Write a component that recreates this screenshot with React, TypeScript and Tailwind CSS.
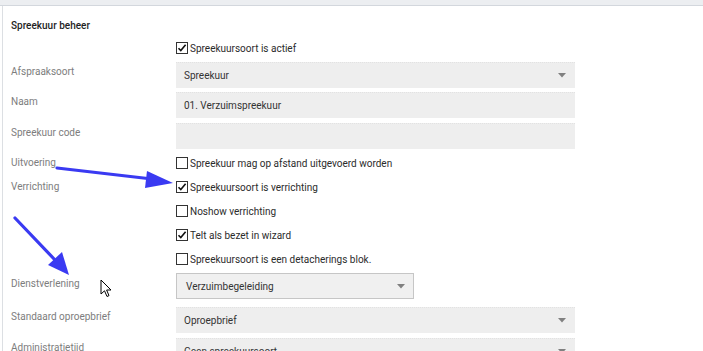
import React from "react";

const font = { fontFamily: "Roboto, 'Noto Sans', Arial, sans-serif" };

function Check({ checked }: { checked?: boolean }) {
  return (
    <span className="relative inline-block w-[12px] h-[12px] border border-[#333] bg-white shrink-0 mr-[2px]">
      {checked && (
        <svg viewBox="0 0 12 12" className="absolute left-[-1px] top-[-1px] w-[12px] h-[12px]">
          <path d="M2.5 6.2 L4.8 8.6 L9.6 2.8" fill="none" stroke="#111" strokeWidth="1.6" />
        </svg>
      )}
    </span>
  );
}

function Caret() {
  return (
    <svg width="8" height="5" viewBox="0 0 8 5" className="shrink-0">
      <path d="M0 0 H8 L4 4.5 Z" fill="#808080" />
    </svg>
  );
}

function Row({ label, children, h = 26, mt = 4 }: { label?: string; children: React.ReactNode; h?: number; mt?: number }) {
  return (
    <div className="flex" style={{ marginTop: mt }}>
      <div className="w-[165px] shrink-0 text-[#7d7d7d] leading-[14px] pt-[3px]">{label}</div>
      <div className="w-[399px]" style={{ height: h }}>{children}</div>
    </div>
  );
}

function Input({ value, select }: { value?: string; select?: boolean }) {
  return (
    <div className="h-full w-full bg-[#eeeeee] border-t border-dotted border-[#e2e2e2] flex items-center pl-[8px] pr-[9px] text-[#333]">
      <span className="flex-1">{value}</span>
      {select && <Caret />}
    </div>
  );
}

function CheckRow({ label, text, checked }: { label?: string; text: string; checked?: boolean }) {
  return (
    <div className="flex h-[24px] items-center">
      <div className="w-[165px] shrink-0 text-[#7d7d7d] leading-[14px]">{label}</div>
      <div className="flex items-center text-[#2b2b2b]">
        <Check checked={checked} />
        <span>{text}</span>
      </div>
    </div>
  );
}

export default function App() {
  return (
    <div className="relative w-[703px] h-[351px] overflow-hidden bg-white text-[10px]" style={font}>
      <div className="h-[6px] bg-[#eceef1] border-b border-[#d3d7dd]" />
      <div className="border-l border-[#dcdfe3] ml-[2px] pl-[8px] h-[345px]">
        <div className="pt-[13px] leading-[14px] font-medium text-[#1f1f1f]">Spreekuur beheer</div>
        <div className="mt-[3px]">
          <CheckRow text="Spreekuursoort is actief" checked />
        </div>
        <Row label="Afspraaksoort" mt={2}>
          <Input value="Spreekuur" select />
        </Row>
        <Row label="Naam" mt={4}>
          <Input value="01. Verzuimspreekuur" />
        </Row>
        <Row label="Spreekuur code" mt={5}>
          <Input />
        </Row>
        <div className="mt-[2px]">
          <CheckRow label="Uitvoering" text="Spreekuur mag op afstand uitgevoerd worden" />
          <CheckRow label="Verrichting" text="Spreekuursoort is verrichting" checked />
          <CheckRow text="Noshow verrichting" />
          <CheckRow text="Telt als bezet in wizard" checked />
          <CheckRow text="Spreekuursoort is een detacherings blok." />
        </div>
        <div className="flex mt-[2px]">
          <div className="w-[165px] shrink-0 text-[#7d7d7d] leading-[14px] pt-[4px]">Dienstverlening</div>
          <div className="w-[238px] h-[26px] bg-[#f0f0f0] border border-[#c6c6c6] flex items-center pl-[9px] pr-[8px] text-[#333]">
            <span className="flex-1">Verzuimbegeleiding</span>
            <Caret />
          </div>
        </div>
        <Row label="Standaard oproepbrief" mt={8}>
          <Input value="Oproepbrief" select />
        </Row>
        <Row label="Administratietijd" mt={5}>
          <Input value="Geen spreekuursoort" select />
        </Row>
      </div>

      {/* annotation arrows */}
      <svg className="absolute left-0 top-0 pointer-events-none" width="703" height="351">
        <line x1="57" y1="168" x2="152" y2="179" stroke="#3a3af2" strokeWidth="3.2" strokeLinecap="round" />
        <polygon points="147,171 173,183 145,188" fill="#3a3af2" />
        <line x1="15" y1="218" x2="56" y2="261" stroke="#3a3af2" strokeWidth="3.2" strokeLinecap="round" />
        <polygon points="48,265 62,252 69,275" fill="#3a3af2" />
      </svg>

      {/* mouse cursor */}
      <svg className="absolute left-[100px] top-[279px]" width="13" height="20" viewBox="0 0 13 20">
        <path d="M1 1 L1 15 L4.5 11.8 L7 17.5 L9 16.6 L6.6 11 L11 11 Z" fill="#fff" stroke="#000" strokeWidth="1" strokeLinejoin="miter" />
      </svg>
    </div>
  );
}
